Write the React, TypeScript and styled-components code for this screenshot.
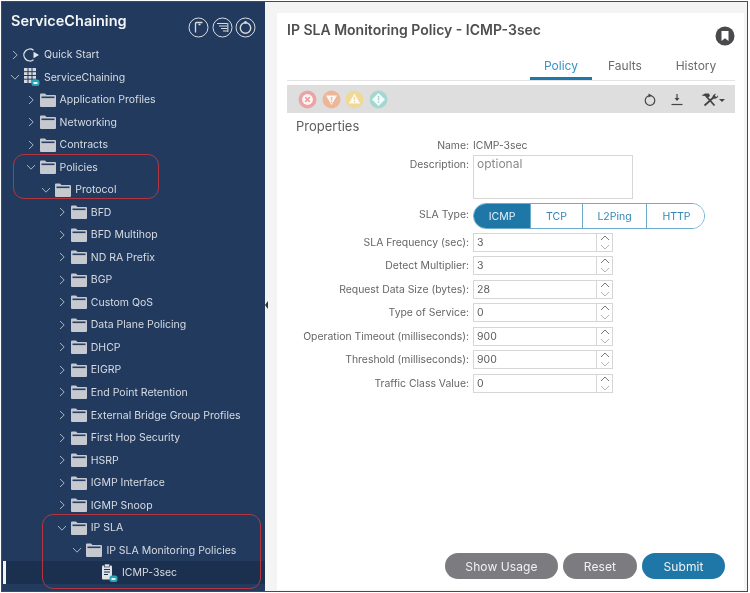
import React from "react";
import styled, { createGlobalStyle } from "styled-components";

const GlobalStyle = createGlobalStyle`
	html, body {
		margin: 0;
		padding: 0;
		background: #fff;
		font-family: Inter, "Noto Sans", sans-serif;
	}
`;

const FolderIcon = () => (
	<svg width="16" height="14" viewBox="0 0 16 14">
		<path d="M0 1.5 Q0 .5 1 .5 H5 L6.5 2 H15 Q16 2 16 3 V13 Q16 14 15 14 H1 Q0 14 0 13 Z" fill="#c6cad0" />
		<rect x="1.5" y="3.5" width="13" height="1.6" fill="#2a3f60" />
	</svg>
);

const Badge = () => (
	<>
		<rect x="8.5" y="11.5" width="8" height="6.5" rx="2.5" fill="#2aa5b5" />
		<rect x="10.5" y="14" width="4" height="2" fill="#e6f4f6" />
	</>
);

const QuickStartIcon = () => (
	<svg width="18" height="14" viewBox="0 0 18 14">
		<path d="M10.5 2.2 A6 6 0 1 0 10.5 11.8" fill="none" stroke="#e3e6ea" strokeWidth="1.3" />
		<path d="M10.5 3.8 L16 7 L10.5 10.2 Z" fill="#e3e6ea" />
	</svg>
);

const TenantIcon = () => (
	<svg width="18" height="18" viewBox="0 0 18 18">
		<rect x="1" y="0" width="12" height="15" fill="#d6dae0" />
		<path d="M1 3.7 H13 M1 7.5 H13 M1 11.2 H13 M5 0 V15 M9 0 V15" stroke="#223a5e" strokeWidth="1" />
		<Badge />
	</svg>
);

const PolicyIcon = () => (
	<svg width="18" height="18" viewBox="0 0 18 18">
		<rect x="1" y="1.5" width="10" height="14" rx="1" fill="#dfe2e6" />
		<rect x="3.5" y="0" width="5" height="3" fill="#dfe2e6" stroke="#1b304f" strokeWidth=".6" />
		<path d="M3 5.5 H9 M3 8 H9 M3 10.5 H7" stroke="#1b304f" strokeWidth="1" />
		<Badge />
	</svg>
);

const Chevron = ({ open }: { open?: boolean }) => (
	<svg width="10" height="10" viewBox="0 0 10 10">
		<path
			d={open ? "M1 3 L5 7.2 L9 3" : "M3 1 L7.2 5 L3 9"}
			fill="none"
			stroke="#aab3c0"
			strokeWidth="1"
		/>
	</svg>
);

const HeaderIcon = ({ kind }: { kind: string }) => (
	<svg width="21" height="21" viewBox="0 0 21 21">
		<circle cx="10.5" cy="10.5" r="9.5" fill="none" stroke="#d8dce2" strokeWidth="1" />
		{kind === "tag" && (
			<path d="M7.5 15.5 V6.5 Q7.5 5.5 8.5 5.5 H14.5 M10.5 7.5 H12.5" fill="none" stroke="#d8dce2" strokeWidth="1.3" />
		)}
		{kind === "list" && (
			<path d="M5 6.5 H15 M7 9 H15 M9 11.5 H15 M11 14 H15 M15.8 6 V15" fill="none" stroke="#d8dce2" strokeWidth="1.1" />
		)}
		{kind === "refresh" && (
			<>
				<circle cx="10.5" cy="11" r="5.2" fill="none" stroke="#d8dce2" strokeWidth="1.4" />
				<circle cx="10.5" cy="5.4" r="1.3" fill="#d8dce2" />
			</>
		)}
	</svg>
);

const StatusIcon = ({ color, kind }: { color: string; kind: string }) => (
	<svg width="19" height="19" viewBox="0 0 19 19">
		<circle cx="9.5" cy="9.5" r="9" fill={color} />
		{kind === "critical" && (
			<>
				<circle cx="9.5" cy="9.5" r="5.4" fill="#fff" opacity=".9" />
				<path d="M7.2 7.2 L11.8 11.8 M11.8 7.2 L7.2 11.8" stroke={color} strokeWidth="1.8" />
			</>
		)}
		{kind === "major" && (
			<>
				<path d="M4 5.5 H15 L9.5 15 Z" fill="#fff" opacity=".9" />
				<path d="M9.5 7 V10.5 M9.5 11.5 V13" stroke={color} strokeWidth="1.4" />
			</>
		)}
		{kind === "minor" && (
			<>
				<path d="M9.5 3.8 L15.2 13.5 H3.8 Z" fill="#fff" opacity=".9" />
				<path d="M9.5 6.8 V10.2 M9.5 11 V12.5" stroke={color} strokeWidth="1.4" />
			</>
		)}
		{kind === "warning" && (
			<>
				<path d="M9.5 3 L16 9.5 L9.5 16 L3 9.5 Z" fill="#fff" opacity=".9" />
				<path d="M9.5 6 V10.5 M9.5 11.5 V13" stroke={color} strokeWidth="1.5" />
			</>
		)}
	</svg>
);

const RefreshIcon = () => (
	<svg width="14" height="15" viewBox="0 0 14 15">
		<circle cx="7" cy="8.5" r="4.8" fill="none" stroke="#444" strokeWidth="1.2" />
		<path d="M5.5 1.5 L9 3.6 L5.5 5.5 Z" fill="#444" />
	</svg>
);

const DownloadIcon = () => (
	<svg width="14" height="15" viewBox="0 0 14 15">
		<path d="M7 2 V8" stroke="#444" strokeWidth="1.2" />
		<path d="M4.5 6 H9.5 L7 9 Z" fill="#444" />
		<path d="M1.5 12.5 H12.5" stroke="#444" strokeWidth="1.2" />
	</svg>
);

const ToolsIcon = () => (
	<svg width="24" height="15" viewBox="0 0 24 15">
		<path d="M0.5 3.5 L4 1.5 H8 L9 4 L6.5 6 L4 4 Z" fill="#444" />
		<path d="M5 4 L13.5 13.5" stroke="#444" strokeWidth="1.8" />
		<path d="M13 5 L3.5 13.5" stroke="#444" strokeWidth="1.8" />
		<path d="M11.5 6 Q11 2.5 15 1.5 L13.8 4 L15.5 5 L17 3.2 Q17.5 6.5 13 6.8 Z" fill="#444" />
		<path d="M18 7 H24 L21 10 Z" fill="#444" />
	</svg>
);

const BookmarkIcon = () => (
	<svg width="20" height="20" viewBox="0 0 20 20">
		<circle cx="10" cy="10" r="9.5" fill="#4a4a4c" />
		<path d="M6.5 5 H13.5 V15 L10 12.3 L6.5 15 Z" fill="#fff" />
	</svg>
);

const Stepper = () => (
	<StepperBox>
		<svg width="12" height="17" viewBox="0 0 12 17">
			<path d="M2 6 L6 2 L10 6" fill="none" stroke="#777" strokeWidth="1" />
			<path d="M2 11 L6 15 L10 11" fill="none" stroke="#b4b4b4" strokeWidth="1" />
		</svg>
	</StepperBox>
);

type TreeItem = {
	label: string;
	depth: number;
	open?: boolean;
	icon?: "folder" | "quick" | "tenant" | "policy";
	selected?: boolean;
};

const tree: TreeItem[] = [
	{ label: "Quick Start", depth: 0, icon: "quick" },
	{ label: "ServiceChaining", depth: 0, open: true, icon: "tenant" },
	{ label: "Application Profiles", depth: 1 },
	{ label: "Networking", depth: 1 },
	{ label: "Contracts", depth: 1 },
	{ label: "Policies", depth: 1, open: true },
	{ label: "Protocol", depth: 2, open: true },
	{ label: "BFD", depth: 3 },
	{ label: "BFD Multihop", depth: 3 },
	{ label: "ND RA Prefix", depth: 3 },
	{ label: "BGP", depth: 3 },
	{ label: "Custom QoS", depth: 3 },
	{ label: "Data Plane Policing", depth: 3 },
	{ label: "DHCP", depth: 3 },
	{ label: "EIGRP", depth: 3 },
	{ label: "End Point Retention", depth: 3 },
	{ label: "External Bridge Group Profiles", depth: 3 },
	{ label: "First Hop Security", depth: 3 },
	{ label: "HSRP", depth: 3 },
	{ label: "IGMP Interface", depth: 3 },
	{ label: "IGMP Snoop", depth: 3 },
	{ label: "IP SLA", depth: 3, open: true },
	{ label: "IP SLA Monitoring Policies", depth: 4, open: true },
	{ label: "ICMP-3sec", depth: 5, icon: "policy", selected: true },
];

const numberFields = [
	{ label: "SLA Frequency (sec):", value: "3" },
	{ label: "Detect Multiplier:", value: "3" },
	{ label: "Request Data Size (bytes):", value: "28" },
	{ label: "Type of Service:", value: "0" },
	{ label: "Operation Timeout (milliseconds):", value: "900" },
	{ label: "Threshold (milliseconds):", value: "900" },
	{ label: "Traffic Class Value:", value: "0" },
];

const slaTypes = ["ICMP", "TCP", "L2Ping", "HTTP"];

const treeIcon = (item: TreeItem) => {
	if (item.icon === "quick") return <QuickStartIcon />;
	if (item.icon === "tenant") return <TenantIcon />;
	if (item.icon === "policy") return <PolicyIcon />;
	return <FolderIcon />;
};

export default function App() {
	return (
		<Frame>
			<GlobalStyle />
			<Sidebar>
				<SidebarHeader>
					<SidebarTitle>ServiceChaining</SidebarTitle>
					<HeaderIcons>
						<HeaderIcon kind="tag" />
						<HeaderIcon kind="list" />
						<HeaderIcon kind="refresh" />
					</HeaderIcons>
				</SidebarHeader>
				<Tree>
					{tree.map((item) => (
						<TreeRow key={item.label + item.depth} $depth={item.depth} $selected={item.selected}>
							{item.selected && <SelectedBar />}
							<ChevronSlot>{item.icon !== "policy" && <Chevron open={item.open} />}</ChevronSlot>
							<IconSlot>{treeIcon(item)}</IconSlot>
							<TreeLabel>{item.label}</TreeLabel>
						</TreeRow>
					))}
				</Tree>
				<Callout $variant="top" />
				<Callout $variant="bottom" />
			</Sidebar>
			<Gutter>
				<GutterHandle />
			</Gutter>
			<Panel>
				<PanelHeader>
					<PanelTitle>IP SLA Monitoring Policy - ICMP-3sec</PanelTitle>
					<BookmarkIcon />
				</PanelHeader>
				<Tabs>
					<Tab $active $width={62}>Policy</Tab>
					<Tab $width={66}>Faults</Tab>
					<Tab $width={76}>History</Tab>
				</Tabs>
				<Toolbar>
					<StatusGroup>
						<StatusIcon color="#eda3a3" kind="critical" />
						<StatusIcon color="#eeb698" kind="major" />
						<StatusIcon color="#f0d896" kind="minor" />
						<StatusIcon color="#a5d7d0" kind="warning" />
					</StatusGroup>
					<ToolGroup>
						<RefreshIcon />
						<DownloadIcon />
						<ToolsMenu>
							<ToolsIcon />
						</ToolsMenu>
					</ToolGroup>
				</Toolbar>
				<SectionTitle>Properties</SectionTitle>
				<Form>
					<FieldLabel>Name:</FieldLabel>
					<StaticValue>ICMP-3sec</StaticValue>
					<FieldLabel $top>Description:</FieldLabel>
					<TextArea>optional</TextArea>
					<FieldLabel>SLA Type:</FieldLabel>
					<Segments>
						{slaTypes.map((type, i) => (
							<Segment key={type} $active={i === 0} $width={[57, 52, 64, 59][i]}>
								{type}
							</Segment>
						))}
					</Segments>
					{numberFields.map((field) => (
						<React.Fragment key={field.label}>
							<FieldLabel>{field.label}</FieldLabel>
							<NumberInput>
								<NumberValue>{field.value}</NumberValue>
								<Stepper />
							</NumberInput>
						</React.Fragment>
					))}
				</Form>
				<Actions>
					<ActionButton $width={113}>Show Usage</ActionButton>
					<ActionButton $width={74}>Reset</ActionButton>
					<ActionButton $width={83} $primary>
						Submit
					</ActionButton>
				</Actions>
			</Panel>
		</Frame>
	);
}

const Frame = styled.div`
	display: flex;
	box-sizing: border-box;
	width: 747px;
	height: 591px;
	margin: 1px 0 0 1px;
	border: 1px solid #4a4a4a;
	background: #f4f4f4;
	overflow: hidden;
	filter: blur(0.3px);
`;

const Sidebar = styled.aside`
	position: relative;
	flex: 0 0 263px;
	background: #223a5e;
	color: #d7dce3;
`;

const SidebarHeader = styled.div`
	display: flex;
	justify-content: space-between;
	height: 41.5px;
	padding: 9px 9px 0 9px;
	box-sizing: border-box;
`;

const SidebarTitle = styled.h1`
	margin: 0;
	font-size: 14.5px;
	font-weight: 600;
	line-height: 20px;
	color: #f2f4f6;
`;

const HeaderIcons = styled.div`
	display: flex;
	gap: 2.5px;
	padding-top: 6px;
`;

const Tree = styled.div`
	display: flex;
	flex-direction: column;
`;

const TreeRow = styled.div<{ $depth: number; $selected?: boolean }>`
	position: relative;
	display: flex;
	align-items: center;
	height: 22.52px;
	padding-left: ${({ $depth }) => 8 + $depth * 15.6}px;
	background: ${({ $selected }) => ($selected ? "#1b304f" : "transparent")};
`;

const SelectedBar = styled.span`
	position: absolute;
	left: 1px;
	top: 0;
	bottom: 0;
	width: 3px;
	background: #f2f2f2;
`;

const ChevronSlot = styled.span`
	display: flex;
	flex: 0 0 10px;
	margin-right: 3px;
`;

const IconSlot = styled.span`
	display: flex;
	align-items: center;
	justify-content: center;
	flex: 0 0 18px;
	margin-right: 3px;
`;

const TreeLabel = styled.span`
	font-size: 10.5px;
	white-space: nowrap;
`;

const Callout = styled.div<{ $variant: "top" | "bottom" }>`
	position: absolute;
	box-sizing: border-box;
	border: 1px solid #b5353f;
	border-radius: 11px;
	left: ${({ $variant }) => ($variant === "top" ? "11px" : "40px")};
	top: ${({ $variant }) => ($variant === "top" ? "152px" : "512px")};
	width: ${({ $variant }) => ($variant === "top" ? "146px" : "219px")};
	height: ${({ $variant }) => ($variant === "top" ? "45px" : "75px")};
`;

const Gutter = styled.div`
	position: relative;
	flex: 0 0 12px;
	background: #f4f4f4;
`;

const GutterHandle = styled.span`
	position: absolute;
	left: 0;
	top: 299px;
	border-style: solid;
	border-width: 4px 3px 4px 0;
	border-color: transparent #333 transparent transparent;
`;

const Panel = styled.main`
	display: flex;
	flex-direction: column;
	box-sizing: border-box;
	flex: 0 0 467px;
	height: 577px;
	margin-top: 11px;
	padding: 0 9px 11px 10px;
	background: #fff;
`;

const PanelHeader = styled.header`
	display: flex;
	justify-content: space-between;
	height: 35px;
	padding-top: 7px;
	box-sizing: border-box;
	svg {
		margin-top: 6px;
	}
`;

const PanelTitle = styled.h2`
	margin: 0;
	font-size: 14px;
	font-weight: 600;
	line-height: 20px;
	color: #4f4f52;
`;

const Tabs = styled.nav`
	display: flex;
	justify-content: flex-end;
	height: 32px;
	padding-right: 1px;
	border-bottom: 1px solid #e4e4e4;
`;

const Tab = styled.div<{ $active?: boolean; $width: number }>`
	display: flex;
	align-items: center;
	justify-content: center;
	box-sizing: border-box;
	height: 32px;
	width: ${({ $width }) => $width}px;
	padding-top: ${({ $active }) => ($active ? "5px" : "2px")};
	font-size: 12px;
	color: ${({ $active }) => ($active ? "#3a93c4" : "#6a6a6d")};
	border-bottom: ${({ $active }) => ($active ? "3px solid #1f77a8" : "none")};
`;

const Toolbar = styled.div`
	display: flex;
	align-items: center;
	justify-content: space-between;
	height: 28px;
	margin-top: 4px;
	padding: 0 10px 0 11px;
	background: #dedede;
`;

const StatusGroup = styled.div`
	display: flex;
	gap: 4.5px;
`;

const ToolGroup = styled.div`
	display: flex;
	align-items: center;
	gap: 13px;
`;

const ToolsMenu = styled.span`
	display: flex;
	margin-left: 4px;
`;

const SectionTitle = styled.h3`
	margin: 5px 0 0 9px;
	font-size: 13px;
	font-weight: 400;
	line-height: 16px;
	color: #5c5c5f;
`;

const Form = styled.div`
	display: grid;
	grid-template-columns: 182px auto;
	justify-content: start;
	column-gap: 4px;
	margin-top: 4px;
	align-items: center;
`;

const FieldLabel = styled.div<{ $top?: boolean }>`
	align-self: ${({ $top }) => ($top ? "start" : "center")};
	padding-top: ${({ $top }) => ($top ? "5px" : "1px")};
	font-size: 10.4px;
	line-height: 14px;
	text-align: right;
	white-space: nowrap;
	color: #66666a;
`;

const StaticValue = styled.div`
	font-size: 10.4px;
	line-height: 15px;
	color: #66666a;
`;

const TextArea = styled.div`
	box-sizing: border-box;
	width: 160px;
	height: 44px;
	margin-top: 2px;
	padding: 0 3px;
	border: 1px solid #d6d6d6;
	font-size: 12px;
	line-height: 16px;
	color: #8a8a8c;
`;

const Segments = styled.div`
	display: flex;
	box-sizing: border-box;
	width: 232px;
	height: 26px;
	margin: 4px 0 1.5px;
	border: 1px solid #6daccd;
	border-radius: 13px;
	overflow: hidden;
`;

const Segment = styled.div<{ $active?: boolean; $width: number }>`
	display: flex;
	align-items: center;
	justify-content: center;
	box-sizing: border-box;
	flex: 0 0 ${({ $width }) => $width}px;
	font-size: 10.5px;
	color: ${({ $active }) => ($active ? "#e6f1f7" : "#2f86b5")};
	background: ${({ $active }) => ($active ? "#1f77a8" : "#fff")};
	border-right: 1px solid #6daccd;
	&:last-child {
		border-right: none;
	}
`;

const NumberInput = styled.div`
	display: flex;
	box-sizing: border-box;
	width: 140px;
	height: 19px;
	margin: 2.25px 0;
	border: 1px solid #d6d6d6;
`;

const NumberValue = styled.span`
	flex: 1;
	padding-left: 3px;
	font-size: 10.5px;
	line-height: 18px;
	color: #5c5c5f;
`;

const StepperBox = styled.span`
	display: flex;
	align-items: center;
	justify-content: center;
	width: 15px;
	border-left: 1px solid #d6d6d6;
`;

const Actions = styled.div`
	display: flex;
	justify-content: flex-end;
	gap: 5px;
	margin-top: auto;
	padding-right: 10px;
`;

const ActionButton = styled.button<{ $width: number; $primary?: boolean }>`
	box-sizing: border-box;
	width: ${({ $width }) => $width}px;
	height: 26px;
	padding: 0;
	border: none;
	border-radius: 13px;
	font-family: inherit;
	font-size: 12px;
	letter-spacing: 0.1px;
	color: #f0f2f4;
	background: ${({ $primary }) => ($primary ? "#1f77a8" : "#7c7c80")};
`;
